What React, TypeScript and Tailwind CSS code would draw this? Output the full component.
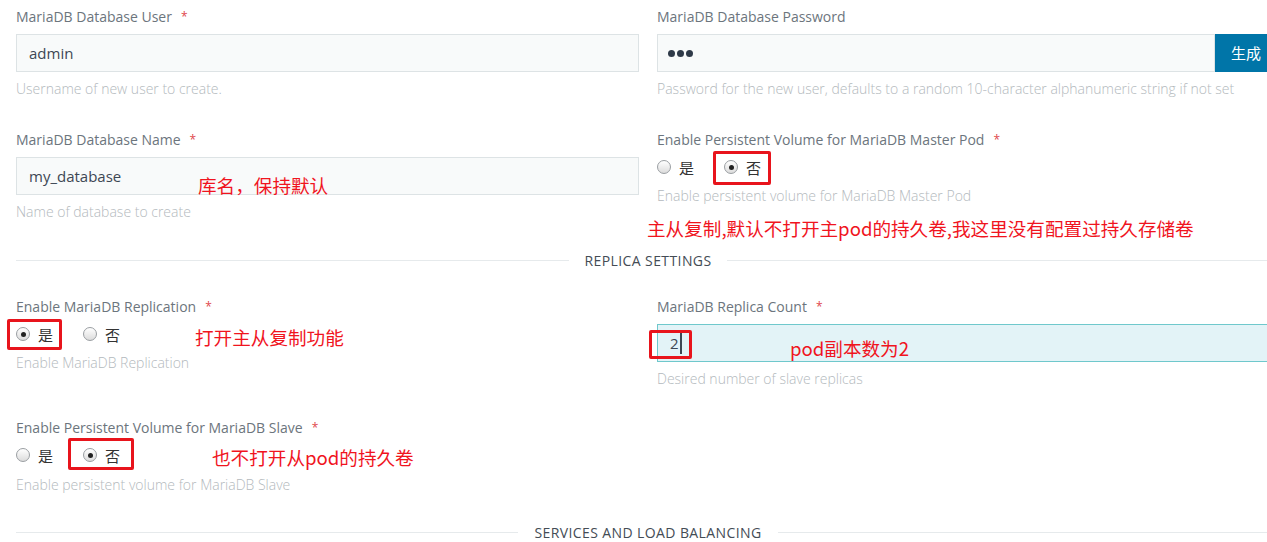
import React from 'react'

const font = { fontFamily: '"Open Sans", "Noto Sans CJK SC", sans-serif' }
const cjk = { fontFamily: '"Noto Sans CJK SC", sans-serif' }

function Label({ text }: { text: string }) {
  return (
    <div className="h-[18px] leading-[18px] text-[14px] text-[#6c757d]">
      {text}
      <span className="ml-[9px] text-[#e0474c] text-[12px] align-top">*</span>
    </div>
  )
}

function Help({ text, className = '' }: { text: string; className?: string }) {
  return <div className={`h-[18px] leading-[18px] text-[14px] font-light text-[#b3b9bd] ${className}`}>{text}</div>
}

function TextBox({ value }: { value: string }) {
  return (
    <div className="mt-2 h-[38px] border border-[#dde3e5] bg-[#f8fafa] flex items-center px-3 text-[15px] text-[#3d4754]">
      {value}
    </div>
  )
}

function Radio({ checked }: { checked?: boolean }) {
  return (
    <span className="w-[14px] h-[14px] rounded-full border border-[#9a9ea2] bg-gradient-to-b from-white to-[#dcdcdc] flex items-center justify-center shrink-0">
      {checked && <span className="w-[5px] h-[5px] rounded-full bg-[#222]" />}
    </span>
  )
}

function RadioRow({ yes, className = '' }: { yes: boolean; className?: string }) {
  return (
    <div className={`h-[18px] flex items-center gap-[30px] text-[15px] text-[#333] ${className}`} style={cjk}>
      <div className="flex items-center gap-[8px]">
        <Radio checked={yes} />
        <span className="leading-none">是</span>
      </div>
      <div className="flex items-center gap-[8px]">
        <Radio checked={!yes} />
        <span className="leading-none">否</span>
      </div>
    </div>
  )
}

function Divider({ title, className = '' }: { title: string; className?: string }) {
  return (
    <div className={`h-5 flex items-center gap-4 ${className}`}>
      <div className="flex-1 h-px bg-[#e6eaec]" />
      <span className="text-[14px] tracking-[0.4px] text-[#444c55]">{title}</span>
      <div className="flex-1 h-px bg-[#e6eaec]" />
    </div>
  )
}

function Note({ text, className }: { text: string; className: string }) {
  return (
    <div className={`absolute text-[18.6px] leading-none text-[#f0141e] whitespace-nowrap ${className}`} style={cjk}>
      {text}
    </div>
  )
}

function Box({ className }: { className: string }) {
  return <div className={`absolute border-[3px] border-[#e8141c] rounded-[2px] ${className}`} />
}

export default function App() {
  return (
    <div className="relative w-[1267px] h-[542px] overflow-hidden bg-white" style={font}>
      <div className="w-[1264px] ml-4 pt-2">
        {/* user / password */}
        <div className="grid grid-cols-2 gap-x-[18px]">
          <div>
            <Label text="MariaDB Database User" />
            <TextBox value="admin" />
            <Help text="Username of new user to create." className="mt-2" />
          </div>
          <div>
            <div className="h-[18px] leading-[18px] text-[14px] text-[#6c757d]">MariaDB Database Password</div>
            <div className="mt-2 h-[38px] flex">
              <div className="flex-1 border border-[#dde3e5] bg-[#f8fafa] flex items-center px-[10px] gap-[2px]">
                <span className="w-[7px] h-[7px] rounded-full bg-[#2f3a48]" />
                <span className="w-[7px] h-[7px] rounded-full bg-[#2f3a48]" />
                <span className="w-[7px] h-[7px] rounded-full bg-[#2f3a48]" />
              </div>
              <button className="w-[65px] bg-[#0075a8] text-white text-[15px] text-left pl-4" style={cjk}>
                生成
              </button>
            </div>
            <Help text="Password for the new user, defaults to a random 10-character alphanumeric string if not set" className="mt-2" />
          </div>
        </div>

        {/* name / master pv */}
        <div className="grid grid-cols-2 gap-x-[18px] mt-[33px]">
          <div>
            <Label text="MariaDB Database Name" />
            <TextBox value="my_database" />
            <Help text="Name of database to create" className="mt-2" />
          </div>
          <div>
            <Label text="Enable Persistent Volume for MariaDB Master Pod" />
            <RadioRow yes={false} className="mt-[9px]" />
            <Help text="Enable persistent volume for MariaDB Master Pod" className="mt-[11px]" />
          </div>
        </div>

        <Divider title="REPLICA SETTINGS" className="mt-[29px]" />

        {/* replication / count */}
        <div className="grid grid-cols-2 gap-x-[18px] mt-[28px]">
          <div>
            <Label text="Enable MariaDB Replication" />
            <RadioRow yes className="mt-[9px]" />
            <Help text="Enable MariaDB Replication" className="mt-[11px]" />
          </div>
          <div>
            <Label text="MariaDB Replica Count" />
            <div className="mt-2 h-[38px] border border-[#6fc8cc] bg-[#e3f3f7] flex items-center px-3 text-[15px] text-[#3d4754]">
              2
              <span className="ml-[1px] w-[2px] h-[22px] bg-[#3d4754]" />
            </div>
            <Help text="Desired number of slave replicas" className="mt-2" />
          </div>
        </div>

        {/* slave pv */}
        <div className="grid grid-cols-2 gap-x-[18px] mt-[31px]">
          <div>
            <Label text="Enable Persistent Volume for MariaDB Slave" />
            <RadioRow yes={false} className="mt-[9px]" />
            <Help text="Enable persistent volume for MariaDB Slave" className="mt-[12px]" />
          </div>
          <div />
        </div>

        <Divider title="SERVICES AND LOAD BALANCING" className="mt-[28px]" />
      </div>

      {/* annotations */}
      <Note text="库名，保持默认" className="left-[198px] top-[176px]" />
      <Note text="主从复制,默认不打开主pod的持久卷,我这里没有配置过持久存储卷" className="left-[647px] top-[219px]" />
      <Note text="打开主从复制功能" className="left-[195px] top-[328px]" />
      <Note text="pod副本数为2" className="left-[790px] top-[339px]" />
      <Note text="也不打开从pod的持久卷" className="left-[212px] top-[448px]" />

      <Box className="left-[7px] top-[319px] w-[55px] h-[31px]" />
      <Box className="left-[713px] top-[151px] w-[58px] h-[34px]" />
      <Box className="left-[68px] top-[438px] w-[66px] h-[32px]" />
      <Box className="left-[649px] top-[330px] w-[43px] h-[29px]" />
    </div>
  )
}
